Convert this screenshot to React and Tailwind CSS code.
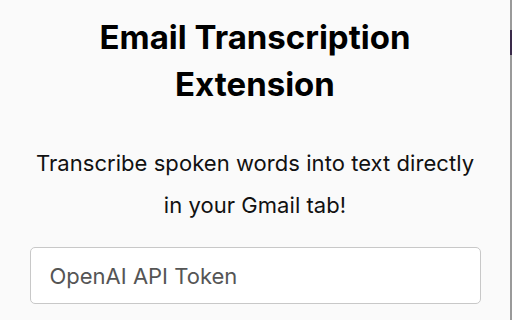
export default function App() {
  return (
    <div className="w-[512px] h-[320px] overflow-hidden flex bg-[#fafafa]" style={{ fontFamily: 'Inter, "Noto Sans", sans-serif' }}>
      <div className="flex-1 flex flex-col items-center pt-[14px]">
        <h1 className="text-[33px] leading-[47px] font-bold text-black text-center">
          Email Transcription
          <br />
          Extension
        </h1>
        <p className="mt-[34px] text-[22px] leading-[42px] text-[#111] text-center tracking-[0.05px]">
          Transcribe spoken words into text directly
          <br />
          in your Gmail tab!
        </p>
        <input
          type="text"
          placeholder="OpenAI API Token"
          className="mt-[21px] w-[451px] h-[57px] rounded-[5px] border border-[#c8c8c8] bg-white px-[19px] text-[22px] text-[#444] placeholder:text-[#555] outline-none"
        />
      </div>
      <div className="w-[2px] flex flex-col">
        <div className="h-[30px] bg-[#9a9a9a]" />
        <div className="h-[25px] bg-[#3a2a4a]" />
        <div className="flex-1 bg-[#9a9a9a]" />
      </div>
    </div>
  )
}
